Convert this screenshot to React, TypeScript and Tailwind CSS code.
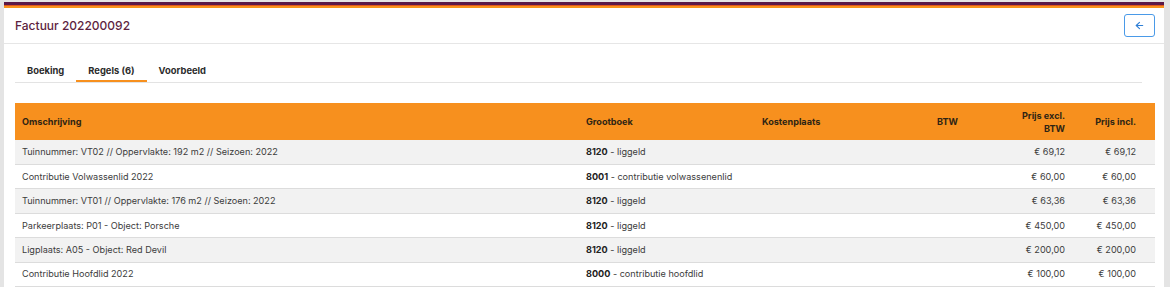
import { ArrowLeft } from "lucide-react";

type Row = {
  desc: string;
  code: string;
  ledger: string;
  excl: string;
  incl: string;
};

const rows: Row[] = [
  { desc: "Tuinnummer: VT02 // Oppervlakte: 192 m2 // Seizoen: 2022", code: "8120", ledger: "liggeld", excl: "€ 69,12", incl: "€ 69,12" },
  { desc: "Contributie Volwassenlid 2022", code: "8001", ledger: "contributie volwassenenlid", excl: "€ 60,00", incl: "€ 60,00" },
  { desc: "Tuinnummer: VT01 // Oppervlakte: 176 m2 // Seizoen: 2022", code: "8120", ledger: "liggeld", excl: "€ 63,36", incl: "€ 63,36" },
  { desc: "Parkeerplaats: P01 - Object: Porsche", code: "8120", ledger: "liggeld", excl: "€ 450,00", incl: "€ 450,00" },
  { desc: "Ligplaats: A05 - Object: Red Devil", code: "8120", ledger: "liggeld", excl: "€ 200,00", incl: "€ 200,00" },
  { desc: "Contributie Hoofdlid 2022", code: "8000", ledger: "contributie hoofdlid", excl: "€ 100,00", incl: "€ 100,00" },
];

export default function App() {
  return (
    <div className="h-[287px] overflow-hidden bg-[#e4e4e4] pl-[4px] pr-[6px] pt-[2px] font-['Inter',sans-serif]">
      <div className="h-full bg-white">
        {/* brand stripe */}
        <div className="h-[3px] bg-[#5b1947]" />
        <div className="h-[1px] bg-[#e0551c]" />
        <div className="h-[2px] bg-[#f7941d]" />

        <div className="flex h-[36px] items-center justify-between border-b border-[#e6e6e6] pl-[11px] pr-[9px]">
          <h1 className="text-[12px] font-medium text-[#5e1f3f]">Factuur 202200092</h1>
          <button className="flex h-[23px] w-[31px] items-center justify-center rounded-[3px] border border-[#4a9ae8] text-[#2f7fd6]">
            <ArrowLeft size={11} strokeWidth={2.4} />
          </button>
        </div>

        <div className="pl-[11px] pr-[22px] pt-[20px]">
          <div className="flex border-b border-[#e3e3e3] text-[9.4px] font-bold text-[#2b2b2b]">
            <span className="px-[12px] pb-[4px]">Boeking</span>
            <span className="border-b-2 border-[#f7901e] px-[12px] pb-[2px]">Regels (6)</span>
            <span className="px-[12px] pb-[4px]">Voorbeeld</span>
          </div>
        </div>

        <div className="pl-[11px] pr-[9px] pt-[20px]">
          <table className="w-full table-fixed border-collapse text-[9.1px] text-[#3c3c3c]">
            <thead>
              <tr className="h-[37px] bg-[#f7901e] font-bold text-[#2e2414]">
                <th className="w-[564px] pl-[7px] text-left">Omschrijving</th>
                <th className="w-[176px] pl-[7px] text-left">Grootboek</th>
                <th className="w-[130px] pl-[7px] text-left">Kostenplaats</th>
                <th className="w-[80px] pr-[7px] text-right">BTW</th>
                <th className="w-[107px] pr-[7px] text-right leading-[13px]">
                  Prijs excl.
                  <br />
                  BTW
                </th>
                <th className="pr-[19px] text-right">Prijs incl.</th>
              </tr>
            </thead>
            <tbody>
              {rows.map((r, i) => (
                <tr
                  key={i}
                  className={
                    "h-[24.4px] border-b border-[#dcdcdc] " + (i % 2 === 0 ? "bg-[#f2f2f2]" : "bg-white")
                  }
                >
                  <td className="pl-[7px]">{r.desc}</td>
                  <td className="pl-[7px]">
                    <span className="font-bold text-[#222]">{r.code}</span> - {r.ledger}
                  </td>
                  <td />
                  <td />
                  <td className="pr-[7px] text-right">{r.excl}</td>
                  <td className="pr-[19px] text-right">{r.incl}</td>
                </tr>
              ))}
            </tbody>
          </table>
        </div>
      </div>
    </div>
  );
}
